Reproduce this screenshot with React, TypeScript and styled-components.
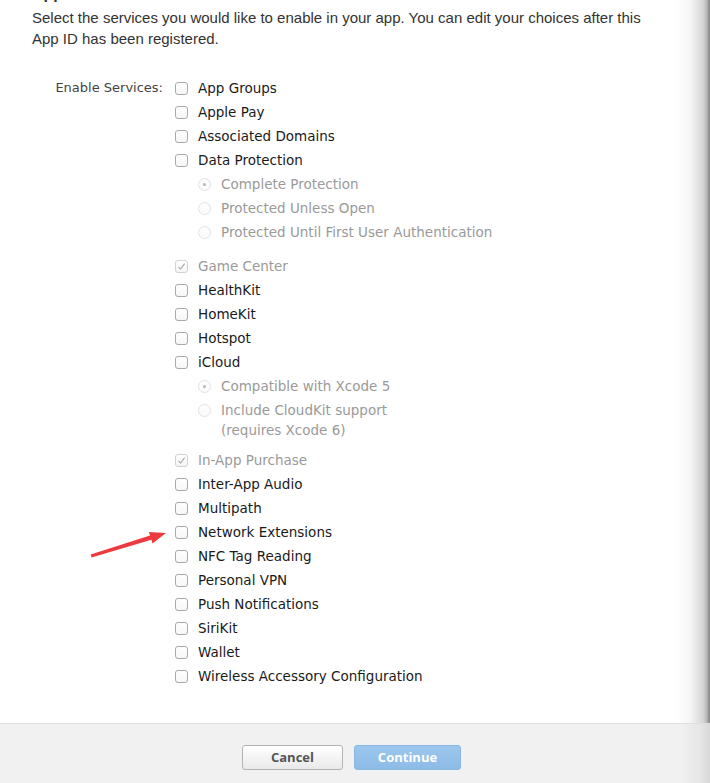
import React from 'react';
import styled, { createGlobalStyle } from 'styled-components';

const GlobalStyle = createGlobalStyle`
  html, body {
    margin: 0;
    padding: 0;
    background: #ffffff;
  }
  * {
    box-sizing: border-box;
  }
`;

type Service = {
  label: string;
  checked?: boolean;
  disabled?: boolean;
  options?: { label: string; selected?: boolean }[];
  after?: number;
};

const services: Service[] = [
  { label: 'App Groups' },
  { label: 'Apple Pay' },
  { label: 'Associated Domains' },
  {
    label: 'Data Protection',
    options: [
      { label: 'Complete Protection', selected: true },
      { label: 'Protected Unless Open' },
      { label: 'Protected Until First User Authentication' },
    ],
    after: 10,
  },
  { label: 'Game Center', checked: true, disabled: true },
  { label: 'HealthKit' },
  { label: 'HomeKit' },
  { label: 'Hotspot' },
  {
    label: 'iCloud',
    options: [
      { label: 'Compatible with Xcode 5', selected: true },
      { label: 'Include CloudKit support\n(requires Xcode 6)' },
    ],
    after: 8,
  },
  { label: 'In-App Purchase', checked: true, disabled: true },
  { label: 'Inter-App Audio' },
  { label: 'Multipath' },
  { label: 'Network Extensions' },
  { label: 'NFC Tag Reading' },
  { label: 'Personal VPN' },
  { label: 'Push Notifications' },
  { label: 'SiriKit' },
  { label: 'Wallet' },
  { label: 'Wireless Accessory Configuration' },
];

const Page = styled.div`
  position: relative;
  width: 710px;
  height: 783px;
  display: flex;
  flex-direction: column;
  overflow: hidden;
`;

const Sheet = styled.main`
  flex: 1;
  padding: 0 0 0 32px;
  background: linear-gradient(
    to right,
    #ffffff 0,
    #ffffff 676px,
    #f6f6f6 690px,
    #d6d6d6 703px,
    #b4b4b4 707px,
    #8e8e8e 709px,
    #8e8e8e 710px
  );
`;

const Heading = styled.h2`
  margin: -15px 0 0;
  height: 18px;
  font-family: 'Liberation Sans', Arial, sans-serif;
  font-size: 16px;
  font-weight: bold;
  color: #333;
  line-height: 18px;
`;

const Intro = styled.p`
  margin: 4px 0 0;
  width: 615px;
  font-family: 'Liberation Sans', Arial, sans-serif;
  font-size: 15px;
  line-height: 21px;
  color: #333;
`;

const Form = styled.div`
  display: grid;
  grid-template-columns: 131px 1fr;
  column-gap: 12px;
  margin-top: 27px;
`;

const FieldLabel = styled.div`
  text-align: right;
  font-family: 'DejaVu Sans', sans-serif;
  font-size: 13px;
  line-height: 24px;
  color: #444;
`;

const List = styled.ul`
  list-style: none;
  margin: 0;
  padding: 0;
`;

const Item = styled.li<{ $after?: number }>`
  margin-bottom: ${(p) => p.$after ?? 0}px;
`;

const Row = styled.label<{ $disabled?: boolean; $indent?: boolean }>`
  display: flex;
  align-items: flex-start;
  gap: 10px;
  padding: ${(p) => (p.$indent ? '0 0 0 23px' : '0')};
  font-family: 'DejaVu Sans', sans-serif;
  font-size: 13.5px;
  line-height: 24px;
  color: ${(p) => (p.$disabled ? '#9a9a9a' : '#1a1a1a')};
`;

const Text = styled.span<{ $multi?: boolean }>`
  white-space: pre-line;
  line-height: ${(p) => (p.$multi ? '20px' : '24px')};
  padding-top: ${(p) => (p.$multi ? '2px' : '0')};
`;

const Box = styled.span<{ $disabled?: boolean }>`
  flex: none;
  width: 13px;
  height: 13px;
  margin-top: 6px;
  border: 1px solid ${(p) => (p.$disabled ? '#d2d2d2' : '#a9a9a9')};
  border-radius: 3px;
  background: linear-gradient(#ffffff, #f6f6f6);
  display: flex;
  align-items: center;
  justify-content: center;
`;

const Radio = styled.span<{ $selected?: boolean }>`
  flex: none;
  width: 13px;
  height: 13px;
  margin-top: 6px;
  border: 1px solid #e2e2e2;
  border-radius: 50%;
  background: #fcfcfc;
  display: flex;
  align-items: center;
  justify-content: center;

  &::after {
    content: '';
    width: 3px;
    height: 3px;
    border-radius: 50%;
    background: ${(p) => (p.$selected ? '#b8b8b8' : 'transparent')};
  }
`;

const Footer = styled.footer`
  flex: none;
  height: 60px;
  border-top: 1px solid #dedede;
  padding: 21px 0 0 242px;
  display: flex;
  gap: 11px;
  background: linear-gradient(
    to right,
    #f1f1f1 0,
    #f1f1f1 680px,
    #e6e6e6 700px,
    #d8d8d8 710px
  );
`;

const Button = styled.button<{ $primary?: boolean; $w: number }>`
  width: ${(p) => p.$w}px;
  height: 25px;
  border-radius: 3px;
  font-family: 'Open Sans', 'Liberation Sans', sans-serif;
  font-size: 13px;
  font-weight: bold;
  line-height: 21px;
  cursor: pointer;
  padding: 0;
  border: 1px solid ${(p) => (p.$primary ? '#8ab8e2' : '#b3b3b3')};
  color: ${(p) => (p.$primary ? '#ffffff' : '#555555')};
  background: ${(p) =>
    p.$primary ? 'linear-gradient(#9cc7ee, #8cbbe6)' : 'linear-gradient(#ffffff, #e9e9e9)'};
`;

const Annotation = styled.svg`
  position: absolute;
  left: 0;
  top: 0;
  pointer-events: none;
`;

const Check = () => (
  <svg width="9" height="9" viewBox="0 0 9 9">
    <path d="M1.5 4.8 L3.6 7 L7.6 1.6" fill="none" stroke="#a5a5a5" strokeWidth="1.1" />
  </svg>
);

export default function App() {
  return (
    <Page>
      <GlobalStyle />
      <Sheet>
        <Heading>App Services</Heading>
        <Intro>
          Select the services you would like to enable in your app. You can edit your choices after this App ID
          has been registered.
        </Intro>
        <Form>
          <FieldLabel>Enable Services:</FieldLabel>
          <List>
            {services.map((s) => (
              <Item key={s.label} $after={s.after}>
                <Row $disabled={s.disabled}>
                  <Box $disabled={s.disabled}>{s.checked && <Check />}</Box>
                  <Text>{s.label}</Text>
                </Row>
                {s.options?.map((o) => (
                  <Row key={o.label} $disabled $indent>
                    <Radio $selected={o.selected} />
                    <Text $multi={o.label.includes('\n')}>{o.label}</Text>
                  </Row>
                ))}
              </Item>
            ))}
          </List>
        </Form>
      </Sheet>
      <Footer>
        <Button $w={101}>Cancel</Button>
        <Button $w={107} $primary disabled>
          Continue
        </Button>
      </Footer>
      <Annotation width="710" height="783" viewBox="0 0 710 783">
        <polygon
          points="90.6,554.6 150.0,535.6 148.9,531.9 166,533 152.5,543.4 151.4,539.8 91.6,557.6"
          fill="#ec3b3f"
        />
      </Annotation>
    </Page>
  );
}
